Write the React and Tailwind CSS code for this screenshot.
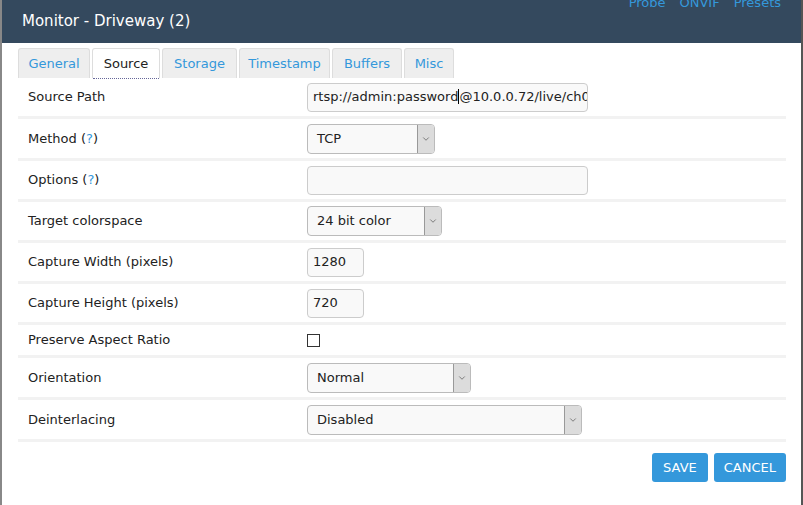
import { ChevronDown } from 'lucide-react';

const TABS = [
  { name: 'General', w: 'w-[72px]' },
  { name: 'Source', w: 'w-[68px]' },
  { name: 'Storage', w: 'w-[75px]' },
  { name: 'Timestamp', w: 'w-[91px]' },
  { name: 'Buffers', w: 'w-[70px]' },
  { name: 'Misc', w: 'w-[50px]' },
];

function Help() {
  return <span> (<span className="text-[#3498db]">?</span>)</span>;
}

function TextBox({ value, w }) {
  return (
    <div className={`${w} h-[29px] flex items-center px-[5px] bg-[#f9f9f9] border border-[#ccc] rounded-[4px] text-[13px] text-[#222] overflow-hidden whitespace-nowrap`}>
      {value}
    </div>
  );
}

function Select({ value, w }) {
  return (
    <div className={`${w} h-[30px] flex bg-[#f9f9f9] border border-[#bbb] rounded-[4px] overflow-hidden`}>
      <div className="flex-1 flex items-center pl-[9px] text-[13px] text-[#222]">{value}</div>
      <div className="w-[17px] flex items-center justify-center bg-[#dcdcdc] border-l border-[#999]">
        <ChevronDown size={10} strokeWidth={1.5} className="text-[#444]" />
      </div>
    </div>
  );
}

const rows = [
  { label: 'Source Path', h: 'h-[41px]', field: <TextBox w="w-[281px]" value={<span>rtsp://admin:password<span className="border-l border-black" />@10.0.0.72/live/ch0</span>} /> },
  { label: <>Method<Help /></>, h: 'h-[42px]', field: <Select w="w-[128px]" value="TCP" /> },
  { label: <>Options<Help /></>, h: 'h-[41px]', field: <TextBox w="w-[281px]" value="" /> },
  { label: 'Target colorspace', h: 'h-[41px]', field: <Select w="w-[135px]" value="24 bit color" /> },
  { label: 'Capture Width (pixels)', h: 'h-[41px]', field: <TextBox w="w-[57px]" value="1280" /> },
  { label: 'Capture Height (pixels)', h: 'h-[41px]', field: <TextBox w="w-[57px]" value="720" /> },
  { label: 'Preserve Aspect Ratio', h: 'h-[33px]', field: <div className="w-[13px] h-[13px] border border-[#333] bg-white" /> },
  { label: 'Orientation', h: 'h-[42px]', field: <Select w="w-[164px]" value="Normal" /> },
  { label: 'Deinterlacing', h: 'h-[42px]', field: <Select w="w-[275px]" value="Disabled" /> },
];

export default function App() {
  return (
    <div className="w-[803px] h-[505px] bg-[#555] flex overflow-hidden" style={{ fontFamily: '"DejaVu Sans", Verdana, sans-serif' }}>
      <div className="w-[2px] bg-[#888]" />
      <div className="w-[799px] h-full bg-white flex flex-col">
        <div className="h-[43px] bg-[#34495e] relative flex items-center pl-[20px] shrink-0">
          <span className="text-white text-[15px]">Monitor - Driveway (2)</span>
          <div className="absolute right-[20px] -top-[7px] flex gap-[14px] text-[13px] text-[#3498db]">
            <span>Probe</span><span>ONVIF</span><span>Presets</span>
          </div>
        </div>

        <div className="pl-[16px] pr-[15px]">
          <div className="flex gap-[2px] pt-[5px] h-[35px]">
            {TABS.map(t => t.name === 'Source' ? (
              <div key={t.name} className={`${t.w} h-[30px] flex items-center justify-center bg-white border border-[#ddd] border-b-0 rounded-t-[3px] text-[13px] text-[#222]`}>
                <span className="border-b border-dotted border-[#669] leading-[28px] w-full text-center mt-[1px]">{t.name}</span>
              </div>
            ) : (
              <div key={t.name} className={`${t.w} h-[30px] flex items-center justify-center bg-[#eee] border border-[#ddd] border-b-0 rounded-t-[3px] text-[13px] text-[#3498db]`}>{t.name}</div>
            ))}
          </div>

          {rows.map((r, i) => (
            <div key={i} className={`${r.h} flex items-center border-b-[3px] border-[#f2f2f2] text-[13px] text-[#222]`}>
              <div className="w-[289px] pl-[10px]">{r.label}</div>
              {r.field}
            </div>
          ))}

          <div className="flex justify-end gap-[6px] pt-[11px]">
            <button className="h-[29px] px-[11px] bg-[#3498db] text-white text-[13px] rounded-[3px]">SAVE</button>
            <button className="h-[29px] px-[10px] bg-[#3498db] text-white text-[13px] rounded-[3px]">CANCEL</button>
          </div>
        </div>
      </div>
      <div className="w-[2px] bg-[#555]" />
    </div>
  );
}
